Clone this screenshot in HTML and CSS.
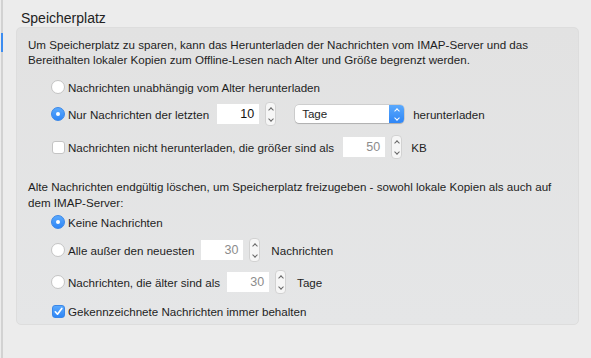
FILE: index.html
```html
<!DOCTYPE html>
<html lang="de">
<head>
    <meta charset="UTF-8">
    <title>Speicherplatz</title>
    <link rel="stylesheet" href="styles.css">
</head>
<body>
    <div class="sidebar-line"><span class="marker"></span></div>
    <div class="pane">
        <h2 class="title">Speicherplatz</h2>
        <div class="box">
            <p class="text">Um Speicherplatz zu sparen, kann das Herunterladen der Nachrichten vom IMAP-Server und das Bereithalten lokaler Kopien zum Offline-Lesen nach Alter und Größe begrenzt werden.</p>

            <div class="row r1">
                <span class="radio"></span>
                <span>Nachrichten unabhängig vom Alter herunterladen</span>
            </div>
            <div class="row r2">
                <span class="radio on"></span>
                <span>Nur Nachrichten der letzten</span>
                <span class="num w1">10</span>
                <span class="stepper"><i class="up"></i><i class="down"></i></span>
                <span class="select"><span class="select-label">Tage</span><span class="select-btn"><i class="up"></i><i class="down"></i></span></span>
                <span class="after">herunterladen</span>
            </div>
            <div class="row r3">
                <span class="check"></span>
                <span>Nachrichten nicht herunterladen, die größer sind als</span>
                <span class="num off w2">50</span>
                <span class="stepper"><i class="up"></i><i class="down"></i></span>
                <span class="after">KB</span>
            </div>

            <p class="text text2">Alte Nachrichten endgültig löschen, um Speicherplatz freizugeben - sowohl lokale Kopien als auch auf dem IMAP-Server:</p>

            <div class="row r4">
                <span class="radio on"></span>
                <span>Keine Nachrichten</span>
            </div>
            <div class="row r5">
                <span class="radio"></span>
                <span>Alle außer den neuesten</span>
                <span class="num off w3">30</span>
                <span class="stepper"><i class="up"></i><i class="down"></i></span>
                <span class="after a2">Nachrichten</span>
            </div>
            <div class="row r6">
                <span class="radio"></span>
                <span>Nachrichten, die älter sind als</span>
                <span class="num off w3">30</span>
                <span class="stepper"><i class="up"></i><i class="down"></i></span>
                <span class="after a2">Tage</span>
            </div>
            <div class="row r7">
                <span class="check on">
                    <svg width="13" height="13" viewBox="0 0 13 13"><path d="M3.3 6.8 L5.5 9.2 L9.8 3.4" fill="none" stroke="#fff" stroke-width="1.7" stroke-linecap="round" stroke-linejoin="round"/></svg>
                </span>
                <span>Gekennzeichnete Nachrichten immer behalten</span>
            </div>
        </div>
    </div>
</body>
</html>
```

FILE: styles.css
```css
body {
    margin: 0;
    width: 591px;
    height: 358px;
    overflow: hidden;
    background-color: #ececec;
    font-family: 'Liberation Sans', Arial, sans-serif;
    font-size: 11.6px;
    color: #1e1e1e;
    display: flex;
}
.sidebar-line {
    width: 2px;
    margin-left: 1px;
    background-color: #d2d2d2;
    height: 358px;
}
.marker {
    display: block;
    margin-top: 33px;
    height: 19px;
    background-color: #3c8cf0;
}
.pane {
    padding-left: 13px;
    width: 563px;
}
.title {
    margin: 0;
    padding: 9px 0 0 5px;
    height: 18px;
    font-size: 14px;
    font-weight: normal;
    line-height: 18px;
    color: #222;
}
.box {
    background: linear-gradient(#e2e2e2, #e5e6e7);
    border: 1px solid #dddddd;
    border-radius: 5px;
    padding: 9px 12px 3px 11px;
    height: 284px;
}
.text {
    margin: 0;
    line-height: 15px;
    width: 540px;
}
.text2 {
    margin-top: 21px;
    line-height: 16px;
}
.row {
    display: flex;
    align-items: center;
    padding-left: 23px;
}
.r1 { margin-top: 10px; height: 20px; }
.r2 { margin-top: 4px; height: 26px; }
.r3 { margin-top: 9px; height: 22px; }
.r4 { margin-top: 1px; height: 20px; }
.r5 { margin-top: 6px; height: 24px; }
.r6 { margin-top: 8px; height: 24px; }
.r7 { margin-top: 7px; height: 20px; }

.radio {
    width: 14px;
    height: 14px;
    box-sizing: border-box;
    border-radius: 50%;
    background: #fff;
    border: 1px solid #c4c4c4;
    margin-right: 3px;
    position: relative;
}
.radio.on {
    background: linear-gradient(#5aa9fd, #2f86f6);
    border-color: #3a87e8;
}
.radio.on::after {
    content: "";
    position: absolute;
    left: 4px;
    top: 4px;
    width: 4px;
    height: 4px;
    border-radius: 50%;
    background: #fff;
}
.check {
    width: 13px;
    height: 13px;
    box-sizing: border-box;
    border-radius: 3px;
    background: #fff;
    border: 1px solid #c4c4c4;
    margin: 0 3px 0 1px;
    display: flex;
}
.check.on {
    background: linear-gradient(#5aa9fd, #2f86f6);
    border-color: #3a87e8;
}
.check svg {
    margin: -1px;
}
.num {
    height: 20px;
    background: #fff;
    text-align: right;
    line-height: 20px;
    padding-right: 5px;
    box-sizing: border-box;
    font-size: 12.5px;
    color: #111;
}
.num.off {
    color: #8c8c8c;
}
.w1 { width: 42px; margin-left: 8px; }
.w2 { width: 42px; margin-left: 9px; }
.w3 { width: 42px; margin-left: 7px; }
.stepper {
    width: 11px;
    height: 24px;
    box-sizing: border-box;
    border: 1px solid #d2d2d2;
    border-radius: 4px;
    background: #f6f6f6;
    margin-left: 6px;
    display: flex;
    flex-direction: column;
    align-items: center;
    justify-content: center;
    gap: 5px;
}
.stepper i, .select-btn i {
    display: block;
    width: 3px;
    height: 3px;
    border-left: 1px solid #666;
    border-top: 1px solid #666;
}
.stepper i.up, .select-btn i.up {
    transform: rotate(45deg);
    margin-top: 2px;
}
.stepper i.down, .select-btn i.down {
    transform: rotate(225deg);
    margin-bottom: 2px;
}
.select {
    width: 109px;
    height: 18px;
    margin-left: 19px;
    background: #fff;
    border-radius: 4px;
    box-shadow: 0 0 0 0.5px rgba(0, 0, 0, 0.18), 0 1px 1px rgba(0, 0, 0, 0.15);
    display: flex;
    overflow: hidden;
}
.select-label {
    flex: 1;
    padding-left: 7px;
    line-height: 18px;
}
.select-btn {
    width: 15px;
    background: linear-gradient(#5aa9fd, #2f86f6);
    display: flex;
    flex-direction: column;
    align-items: center;
    justify-content: center;
    gap: 3px;
}
.select-btn i {
    border-color: #fff;
}
.after {
    margin-left: 9px;
}
.a2 {
    margin-left: 11px;
}
```
